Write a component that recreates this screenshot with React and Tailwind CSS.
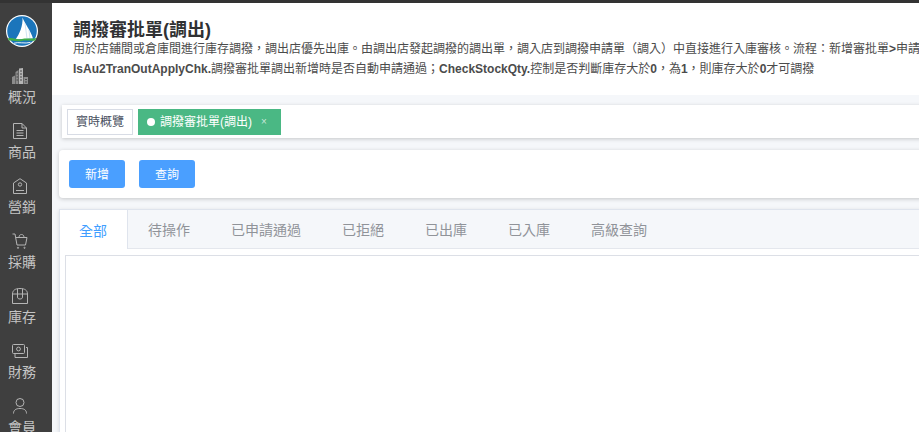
import React from 'react';

const cjk = { fontFamily: '"Liberation Sans", "Noto Sans CJK TC", sans-serif' };

const Logo = () => (
  <svg width="32" height="32" viewBox="0 0 32 32">
    <circle cx="16" cy="16" r="16" fill="#fff" />
    <circle cx="16" cy="16" r="14.8" fill="#1b75bb" />
    <path d="M16.5 2.5 C19 9 25 16 27 23.5 L9.5 24.5 C13.5 19 17 11 16.5 2.5Z" fill="#fff" />
    <path d="M19 8 L21 23.5 M23 15 L24 23.5" stroke="#9cc6e6" strokeWidth="0.5" fill="none" />
    <path d="M1.8 23.5 C7 21.8 11 25.5 16 24 C21 22.5 25 24.5 30.2 23 L29.3 25.6 C24 26.4 20 25 16 26 C11 27.2 7 24.6 3 25.8Z" fill="#3fae49" />
    <path d="M8 28.2 C12 26.6 19 29 24.5 27.4" stroke="#fff" strokeWidth="0.9" fill="none" />
  </svg>
);

const BuildingIcon = () => (
  <svg width="18" height="17" viewBox="0 0 18 17" fill="#a3a3a3">
    <path d="M1 9 L4 7.5 V16 H1Z" fill="#8c8c8c" />
    <path d="M4.5 4 L7.5 2 V16 H4.5Z" fill="#8c8c8c" />
    <path d="M8 0.5 L12 0 V16 H8Z" fill="#b5b5b5" />
    <path d="M12.5 9 H17 V16 H12.5Z" fill="#8c8c8c" />
    <path d="M5.5 6 H7 M5.5 9 H7 M5.5 12 H7 M9 3 H11 M9 6 H11 M9 9 H11 M9 12 H11 M14 11.5 H16 M14 14 H16" stroke="#3f3f3f" strokeWidth="0.9" />
  </svg>
);

const DocIcon = () => (
  <svg width="14" height="16" viewBox="0 0 14 16" fill="none" stroke="#b5b5b5" strokeWidth="1">
    <path d="M0.5 0.5 H9 L13.5 5 V15.5 H0.5Z" />
    <path d="M9 0.5 V5 H13.5 M3.5 7.5 H10.5 M3.5 10 H10.5 M3.5 12.5 H10.5" />
  </svg>
);

const TagIcon = () => (
  <svg width="14" height="16" viewBox="0 0 14 16" fill="none" stroke="#b5b5b5" strokeWidth="1">
    <path d="M0.5 5 L7 0.7 L13.5 5 V15.5 H0.5Z" />
    <circle cx="7" cy="6.5" r="1.7" />
    <path d="M3 12.5 H11" />
  </svg>
);

const CartIcon = () => (
  <svg width="16" height="16" viewBox="0 0 16 16" fill="none" stroke="#b5b5b5" strokeWidth="1">
    <path d="M0.5 1 H3 L5 12 H13.5 L15 4.5 H3.8" />
    <path d="M7 4.5 C7 2.5 8 1.5 9.5 1.5 C11 1.5 12 2.5 12 4.5" />
    <circle cx="6" cy="14.8" r="0.6" />
    <circle cx="12.5" cy="14.8" r="0.6" />
  </svg>
);

const BoxIcon = () => (
  <svg width="16" height="16" viewBox="0 0 16 16" fill="none" stroke="#b5b5b5" strokeWidth="1">
    <path d="M0.5 6 C0.5 2.5 3 0.5 8 0.5 C13 0.5 15.5 2.5 15.5 6 V15.5 H0.5Z" />
    <path d="M0.5 6 H15.5 M5.5 1 V9 C5.5 10.5 6.5 11 8 11 C9.5 11 10.5 10.5 10.5 9 V1" />
  </svg>
);

const MoneyIcon = () => (
  <svg width="16" height="14" viewBox="0 0 16 14" fill="none" stroke="#b5b5b5" strokeWidth="1">
    <rect x="0.5" y="0.5" width="12" height="9" rx="1" />
    <circle cx="6.5" cy="5" r="1.9" />
    <path d="M14 3.5 H15.5 V13.5 H3 V10" />
  </svg>
);

const UserIcon = () => (
  <svg width="14" height="16" viewBox="0 0 14 16" fill="none" stroke="#b5b5b5" strokeWidth="1">
    <circle cx="7" cy="4.5" r="4" />
    <path d="M0.5 15.5 C0.5 12 3 10.5 7 10.5 C11 10.5 13.5 12 13.5 15.5" />
  </svg>
);

const menus = [
  { label: '概況', Icon: BuildingIcon },
  { label: '商品', Icon: DocIcon },
  { label: '營銷', Icon: TagIcon },
  { label: '採購', Icon: CartIcon },
  { label: '庫存', Icon: BoxIcon },
  { label: '財務', Icon: MoneyIcon },
  { label: '會員', Icon: UserIcon },
];

const tabs = ['待操作', '已申請通過', '已拒絕', '已出庫', '已入庫', '高級查詢'];

export default function App() {
  return (
    <div className="w-[919px] h-[432px] overflow-hidden flex flex-col bg-[#f5f7fa]" style={cjk}>
      <div className="h-[3px] shrink-0 bg-[#333333]" />
      <div className="flex flex-1 min-h-0">
        {/* Sidebar */}
        <aside className="w-[52px] shrink-0 bg-[#3f3f3f] pr-[8px] flex flex-col items-center overflow-hidden">
          <div className="mt-[12px] mb-[19px] h-[32px]">
            <Logo />
          </div>
          {menus.map(({ label, Icon }) => (
            <div key={label} className="h-[55px] shrink-0 flex flex-col items-center">
              <div className="h-[20px] -ml-[4px] flex items-center justify-center">
                <Icon />
              </div>
              <span className="mt-[1px] text-sm leading-[20px] text-[#c4c4c4] whitespace-nowrap">{label}</span>
            </div>
          ))}
        </aside>

        {/* Page content runs past the window on the right, as in the app */}
        <main className="flex-1 min-w-0 overflow-hidden">
          <div className="w-[1200px]">
            {/* Header */}
            <div className="h-[92px] bg-white pl-[21px] pt-[16px]">
              <h1 className="text-lg font-bold leading-[22px] -mb-[2px] text-[#303133] whitespace-nowrap">調撥審批單(調出)</h1>
              <p className="text-xs leading-[20px] text-[#4b4b4b] whitespace-nowrap">
                用於店鋪間或倉庫間進行庫存調撥，調出店優先出庫。由調出店發起調撥的調出單，調入店到調撥申請單（調入）中直接進行入庫審核。流程：新增審批單<b>&gt;</b>申請通過<b>&gt;</b>出庫<b>&gt;</b>入庫
              </p>
              <p className="text-xs leading-[20px] text-[#4b4b4b] whitespace-nowrap">
                <b>IsAu2TranOutApplyChk.</b>調撥審批單調出新增時是否自動申請通過；<b>CheckStockQty.</b>控制是否判斷庫存大於<b>0</b>，為<b>1</b>，則庫存大於<b>0</b>才可調撥
              </p>
            </div>

            {/* Opened pages */}
            <div className="mt-[10px] ml-[10px] h-[33px] bg-white shadow-[0_1px_4px_rgba(0,0,0,0.2)] flex items-center pl-[5px] gap-[5px]">
              <span className="h-[26px] w-[66px] pt-[1px] flex items-center justify-center border border-[#d8dce5] text-xs text-[#495060]">
                實時概覽
              </span>
              <span className="h-[26px] w-[143px] bg-[#4ab884] flex items-center pl-[9px] text-xs text-white">
                <span className="w-2 h-2 rounded-full bg-white mr-[6px]" />
                <span className="-ml-[1px] pt-[1px]">調撥審批單(調出)</span>
                <span className="ml-[9px] text-[10px] leading-none text-white/70">×</span>
              </span>
            </div>

            {/* Actions */}
            <div className="mt-[12px] ml-[7px] h-[48px] bg-white rounded-l shadow-[0_1px_4px_rgba(0,0,0,0.2)] flex items-center pl-[10px] gap-[14px]">
              <button className="w-[56px] h-[28px] pt-[1px] rounded-[3px] bg-[#4a9fff] text-xs text-white">新增</button>
              <button className="w-[56px] h-[28px] pt-[1px] rounded-[3px] bg-[#4a9fff] text-xs text-white">查詢</button>
            </div>

            {/* Tabs */}
            <div className="mt-[11px] ml-[7px] h-[300px] bg-white border border-[#dfe4ed] shadow-[0_1px_4px_rgba(0,0,0,0.12)]">
              <div className="h-[39px] bg-[#f5f7fa] border-b border-[#e4e7ed] flex text-sm">
                <span className="h-[39px] pt-[2px] pl-[19px] pr-[20px] bg-white border-r border-[#dfe4ed] flex items-center text-[#409eff]">全部</span>
                {tabs.map((t) => (
                  <span key={t} className="h-[38px] pt-[2px] pl-[20px] pr-[21px] flex items-center text-[#909399] whitespace-nowrap">{t}</span>
                ))}
              </div>
              <div className="mt-[6px] ml-[5px] h-[240px] border border-[#dcdfe6] bg-white" />
            </div>
          </div>
        </main>
      </div>
    </div>
  );
}
